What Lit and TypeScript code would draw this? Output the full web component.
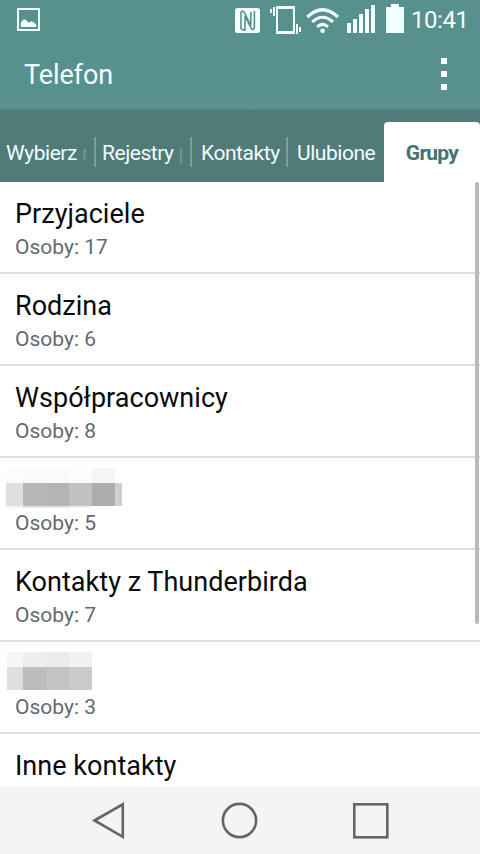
import { LitElement, html, svg, css, nothing } from "lit";
import { customElement } from "lit/decorators.js";
import { styleMap } from "lit/directives/style-map.js";

type Block = [x: number, y: number, w: number, h: number, fill: string];
interface Group {
  name?: string;
  blocks?: Block[];
  people?: number;
}

const GROUPS: Group[] = [
  { name: "Przyjaciele", people: 17 },
  { name: "Rodzina", people: 6 },
  { name: "Współpracownicy", people: 8 },
  {
    people: 5,
    blocks: [
      [6, 10, 17, 15, "#fcfcfc"], [23, 10, 23, 15, "#fafafa"], [46, 10, 23, 15, "#fafafa"],
      [69, 10, 23, 15, "#fdfdfd"], [92, 10, 23, 15, "#f5f5f5"],
      [6, 25, 17, 23, "#dfdfdf"], [23, 25, 23, 23, "#b7b7b7"], [46, 25, 23, 23, "#b4b4b4"],
      [69, 25, 23, 23, "#c2c2c2"], [92, 25, 23, 23, "#adadad"], [115, 25, 7, 23, "#cecece"],
      [6, 48, 17, 2, "#f4f4f4"], [23, 48, 46, 2, "#e4e4e4"], [69, 48, 23, 2, "#eeeeee"],
    ],
  },
  { name: "Kontakty z Thunderbirda", people: 7 },
  {
    people: 3,
    blocks: [
      [7, 10, 16, 15, "#f6f6f6"], [23, 10, 23, 15, "#eeeeee"], [46, 10, 23, 15, "#ebebeb"],
      [69, 10, 23, 15, "#f1f1f1"],
      [7, 25, 16, 23, "#dfdfdf"], [23, 25, 23, 23, "#bcbcbc"], [46, 25, 23, 23, "#c3c3c3"],
      [69, 25, 23, 23, "#cacaca"],
    ],
  },
  { name: "Inne kontakty" },
];

function mosaicBlock([x, y, w, h, fill]: Block) {
  return svg`<rect x=${x} y=${y} width=${w} height=${h} fill=${fill}></rect>`;
}

@customElement("status-bar")
class StatusBar extends LitElement {
  static styles = css`
    :host { display: flex; height: 40px; color: #f2ffff; font-size: 24px; }
    svg { flex: none; display: block; }
    .time { line-height: 40px; margin-left: 3px; letter-spacing: -0.45px; white-space: nowrap; }
  `;
  render() {
    return html`
      <svg width="408" height="40" viewBox="0 0 408 40" fill="#f2ffff">
        <path fill-rule="evenodd" d="M17 8h23v23H17zM19 10v19h19V10z" />
        <path d="M20.8 27v-4.3q2.5-3.8 4.3-3.4l3.6 3.4 3-1.6 4.6 3.4V27z" />
        <rect x="235" y="8" width="25" height="25" rx="2.5" />
        <g fill="none" stroke="#58908e" stroke-width="1.6">
          <path d="M241 29V12.5Q242 9.5 244.3 12.5L250.8 25.5V12" />
          <path d="M254.4 11V28Q253 31.3 251 28L245 16V30Q243 30.5 241 28.5" />
        </g>
        <path fill-rule="evenodd" d="M276 7.2q0-1.2 1.2-1.2h16.6q1.2 0 1.2 1.2v25.6q0 1.2-1.2 1.2h-16.6q-1.2 0-1.2-1.2zM278 9v22h15V9z" />
        <path d="M270 9h2v4h-2zM273 7h2v9h-2zM296 24h2v10h-2zM299 27h2v5h-2z" />
        <g fill="none" stroke="#f2ffff" stroke-width="3.1">
          <path d="M307.2 17Q322.5 2.5 338 17" />
          <path d="M312.3 22Q322.5 12.5 333 22" />
          <path d="M317.2 26.8Q322.5 22 328 26.8" />
        </g>
        <circle cx="322.6" cy="30.7" r="2.3" />
        <path d="M347 23h4v10h-4zM353 19h4v14h-4zM359 14h4v19h-4zM365 9h4v24h-4zM371 5h4v28h-4zM386 7h5V4h8v3h5v26h-18z" />
      </svg>
      <span class="time">10:41</span>
    `;
  }
}

@customElement("tab-strip")
class TabStrip extends LitElement {
  static styles = css`
    :host {
      display: grid; grid-template-columns: repeat(5, 96px); height: 72px;
      background: #507b79; color: #f0fdfd; font-size: 21px; letter-spacing: -0.45px;
      line-height: 62px; white-space: nowrap;
    }
    .tab { margin-top: 12px; height: 60px; display: flex; position: relative; }
    .tab + .tab:not(.active)::before {
      content: ""; position: absolute; left: -2px; top: 15px; width: 2px; height: 30px; background: #7c9f9e;
    }
    .tab:nth-child(1), .tab:nth-child(2) { padding-left: 6px; }
    .tab:nth-child(3), .tab:nth-child(4) { padding-left: 9px; }
    .cut { display: block; width: 5px; margin-left: 5px; overflow: hidden; color: #6d9794; }
    .low { width: 3px; }
    .active {
      justify-content: center; background: #fff; color: #467270; font-weight: 700;
      letter-spacing: -0.75px; border-radius: 4px 4px 0 0;
    }
  `;
  render() {
    return html`
      <div class="tab">Wybierz<span class="cut">n</span></div>
      <div class="tab">Rejestry<span class="cut low">p</span></div>
      <div class="tab">Kontakty</div>
      <div class="tab">Ulubione</div>
      <div class="tab active">Grupy</div>
    `;
  }
}

@customElement("group-row")
class GroupRow extends LitElement {
  static properties = { group: { attribute: false } };
  declare group: Group;
  static styles = css`
    :host {
      display: block; box-sizing: border-box; height: 92px; flex: none;
      border-bottom: 2px solid #dfdfdf;
    }
    .name { height: 50px; padding-left: 15px; font-size: 27px; letter-spacing: 0.03px; line-height: 64px; color: #0a0a0a; white-space: nowrap; }
    .mosaic { display: block; height: 50px; }
    .people { padding-left: 15px; font-size: 21px; line-height: 30px; color: #636a6f; }
  `;
  render() {
    const { name, blocks, people } = this.group;
    return html`
      ${blocks
        ? html`<svg class="mosaic" width="130" height="50" shape-rendering="crispEdges">${blocks.map(mosaicBlock)}</svg>`
        : html`<div class="name">${name}</div>`}
      ${people === undefined ? nothing : html`<div class="people">Osoby: ${people}</div>`}
    `;
  }
}

@customElement("app-root")
class AppRoot extends LitElement {
  static styles = css`
    :host {
      display: flex; flex-direction: column; width: 480px; height: 854px; overflow: hidden;
      background: #fff; font-family: Roboto, "Noto Sans", sans-serif;
    }
    .top { height: 110px; flex: none; background: linear-gradient(#58908e 0 103px, #5b9491 108px, #548582 109px, #507b79 110px); }
    .title { display: flex; height: 70px; justify-content: space-between; padding: 0 33px 0 24px; color: #f0fdfd; font-size: 27px; letter-spacing: -0.1px; line-height: 70px; }
    .dots { display: flex; flex-direction: column; gap: 7px; padding-top: 18px; }
    .dots i { width: 6px; height: 6px; background: #fff; }
    .list { position: relative; flex: 1; min-height: 0; overflow: hidden; display: flex; flex-direction: column; }
    .thumb { position: absolute; right: 1px; top: 0; width: 4px; border-radius: 2px; background: #b9b9b9; }
    .nav { flex: none; height: 68px; background: #f4f4f4; }
    .nav svg { display: block; }
  `;
  render() {
    return html`
      <div class="top">
        <status-bar></status-bar>
        <div class="title"><span>Telefon</span><div class="dots"><i></i><i></i><i></i></div></div>
      </div>
      <tab-strip></tab-strip>
      <div class="list">
        ${GROUPS.map((g) => html`<group-row .group=${g}></group-row>`)}
        <div class="thumb" style=${styleMap({ height: "442px" })}></div>
      </div>
      <div class="nav">
        <svg width="480" height="68" fill="none" stroke="#5f666c" stroke-width="2.6">
          <path d="M94.5 34.5L122.8 18.3V50.8z" />
          <circle cx="239.5" cy="34.5" r="16.6" />
          <rect x="354.3" y="18.3" width="33" height="33" />
        </svg>
      </div>
    `;
  }
}
